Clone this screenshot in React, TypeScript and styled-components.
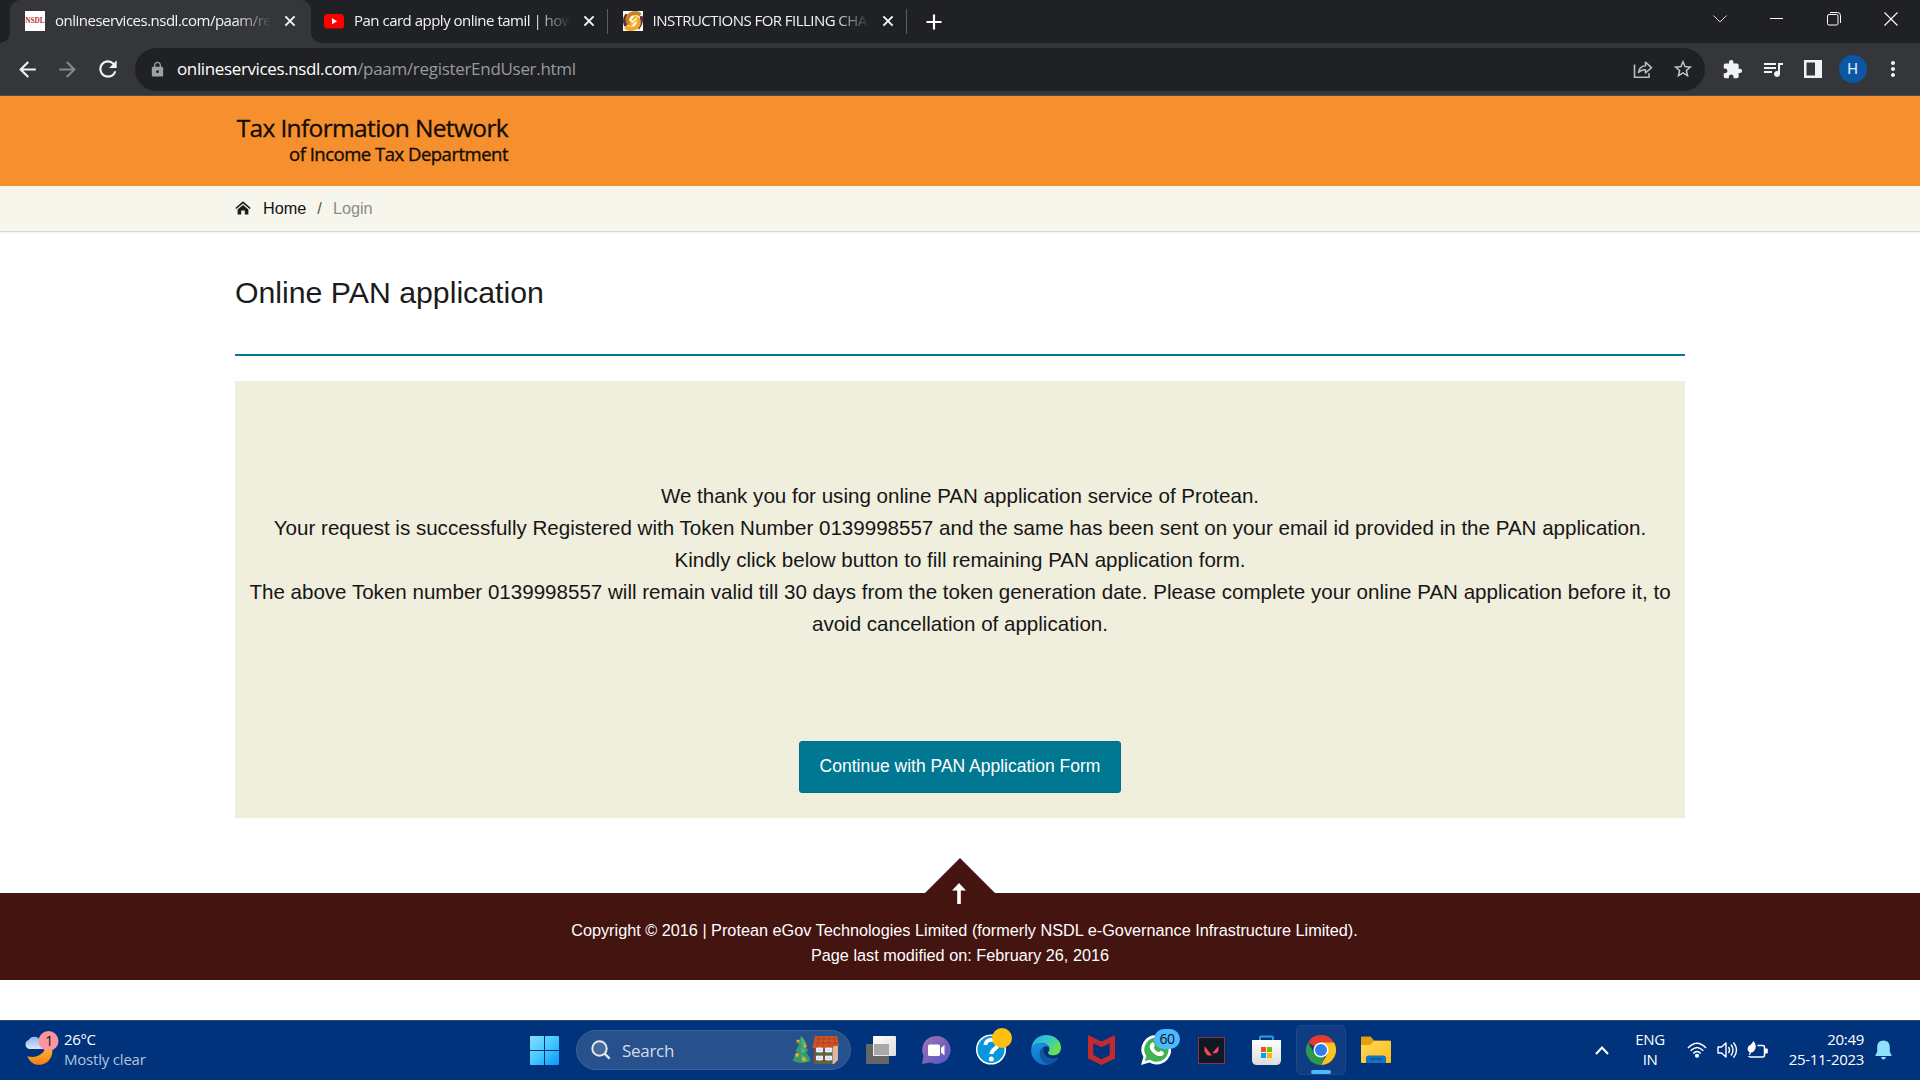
import React from "react";
import styled, { createGlobalStyle } from "styled-components";
import { MdArrowBack, MdArrowForward, MdExtension, MdLock, MdMoreVert, MdQueueMusic, MdRefresh, MdStarOutline } from "react-icons/md";

const ui = `"Open Sans", "Noto Sans", sans-serif`;
const arial = `"Liberation Sans", Arial, sans-serif`;

const Global = createGlobalStyle`
  * { box-sizing: border-box; }
  body { margin: 0; background: #fff; overflow: hidden; }
  svg { display: block; flex: none; }
`;

const Screen = styled.div`
  width: 1920px;
  height: 1080px;
  display: flex;
  flex-direction: column;
  overflow: hidden;
  font-family: ${arial};
`;

/* ---------- browser chrome ---------- */

const TabStrip = styled.div`
  height: 43px;
  flex: none;
  display: flex;
  padding-left: 10px;
  background: #202124;
  color: #f1f3f4;
`;

const TabBox = styled.div<{ $active?: boolean; $divider?: boolean }>`
  position: relative;
  width: ${(p) => (p.$active ? 301 : 298.5)}px;
  margin-right: ${(p) => (p.$active ? -2 : 0)}px;
  height: 43px;
  display: flex;
  align-items: center;
  padding: 0 0 1px 15px;
  border-radius: 10px 10px 0 0;
  background: ${(p) => (p.$active ? "#35363a" : "transparent")};
  &::after {
    content: "";
    display: ${(p) => (p.$divider ? "block" : "none")};
    position: absolute;
    right: -0.5px;
    top: 9px;
    width: 1px;
    height: 25px;
    background: #5b5e62;
  }
`;

const Flare = styled.span<{ $side: "left" | "right" }>`
  position: absolute;
  bottom: 0;
  ${(p) => p.$side}: -10px;
  width: 10px;
  height: 10px;
  background: radial-gradient(circle at ${(p) => (p.$side === "left" ? "0 0" : "100% 0")}, transparent 9.5px, #35363a 10px);
`;

const TabTitle = styled.span<{ $spacing: number }>`
  width: 215px;
  margin-left: 10px;
  padding-bottom: 2px;
  font: 400 15px/24px ${ui};
  letter-spacing: ${(p) => p.$spacing}px;
  white-space: nowrap;
  overflow: hidden;
  mask-image: linear-gradient(to right, #000 180px, transparent 217px);
`;

const TabClose = styled.span`
  display: flex;
  margin-left: 10px;
`;

const NewTab = styled.span`
  display: flex;
  align-items: center;
  margin-left: 20px;
`;

const WindowControls = styled.div`
  display: flex;
  margin-left: auto;
  padding-right: 1px;
`;

const WindowButton = styled.span`
  width: 57px;
  height: 37px;
  display: flex;
  align-items: center;
  justify-content: center;
`;

const Toolbar = styled.div`
  height: 53px;
  flex: none;
  display: flex;
  align-items: center;
  padding: 0 7.5px;
  background: #35363a;
  border-bottom: 1px solid #4a4b4e;
`;

const ToolSlot = styled.span<{ $color?: string }>`
  width: 40px;
  display: flex;
  justify-content: center;
  color: ${(p) => p.$color ?? "#f1f3f4"};
`;

const Omnibox = styled.div`
  flex: 1;
  height: 43px;
  display: flex;
  align-items: center;
  margin: 0 7.5px;
  padding: 0 2.5px 0 14px;
  border-radius: 22px;
  background: #202124;
`;

const Url = styled.span`
  flex: 1;
  margin-left: 11px;
  font: 400 17px/28px ${ui};
  letter-spacing: -0.37px;
  color: #fff;
`;

const UrlPath = styled.span`
  color: #969a9f;
  letter-spacing: -0.3px;
`;

const Avatar = styled.span`
  width: 28px;
  height: 28px;
  border-radius: 50%;
  background: #0b57a4;
  color: #e6f0fa;
  font: 400 15px/28px Roboto, sans-serif;
  text-align: center;
`;

/* ---------- page ---------- */

const Banner = styled.header`
  height: 90px;
  flex: none;
  padding: 17px 0 0 235px;
  background: #f68f2e;
`;

const BrandBlock = styled.div`
  width: 273px;
  text-align: right;
  color: #140d04;
  white-space: nowrap;
  -webkit-text-stroke: 0.35px #140d04;
`;

const BrandName = styled.div`
  font: 400 24.5px/30px ${ui};
  letter-spacing: -0.64px;
`;

const BrandSub = styled.div`
  font: 400 18.5px/21px ${ui};
  letter-spacing: -0.5px;
`;

const Breadcrumb = styled.nav`
  height: 46px;
  flex: none;
  display: flex;
  align-items: center;
  padding: 0 0 1px 235px;
  background: #f7f6ec;
  border-bottom: 1px solid #d9d9d6;
  box-shadow: 0 1px 2px rgba(0, 0, 0, 0.07);
  font-size: 16.25px;
`;

const Crumb = styled.span<{ $color: string; $gap: number }>`
  margin-left: ${(p) => p.$gap}px;
  color: ${(p) => p.$color};
`;

const Main = styled.main`
  height: 626px;
  flex: none;
  padding: 0 235px;
`;

const Title = styled.h1`
  height: 124px;
  margin: 0;
  padding-top: 43px;
  border-bottom: 2px solid #007a94;
  color: #1b1b1b;
  font: 400 30.25px/36px ${arial};
`;

const Panel = styled.section`
  height: 437px;
  margin-top: 25px;
  padding-top: 99px;
  display: flex;
  flex-direction: column;
  align-items: center;
  background: #f0eedd;
`;

const Message = styled.p`
  margin: 0;
  color: #161616;
  font-size: 20.57px;
  line-height: 32px;
  text-align: center;
  white-space: nowrap;
`;

const Continue = styled.button`
  width: 322px;
  height: 52px;
  margin-top: 101px;
  padding: 0 0 2px;
  border: 1px solid #006d86;
  border-radius: 3px;
  background: #007892;
  color: #fff;
  font: 400 17.5px/24px ${arial};
`;

const ToTop = styled.div`
  position: relative;
  z-index: 1;
  height: 35px;
  flex: none;
  display: flex;
  justify-content: center;
  align-items: flex-start;
`;

const Footer = styled.footer`
  height: 87px;
  flex: none;
  padding-top: 25px;
  background: #441411;
  color: #fff;
  font-size: 16.25px;
  line-height: 25px;
  text-align: center;
`;

const Copyright = styled.div`
  padding-left: 9px;
`;

/* ---------- taskbar ---------- */

const Taskbar = styled.div`
  height: 60px;
  margin-top: auto;
  flex: none;
  display: flex;
  align-items: center;
  padding-bottom: 1px;
  background: #00337c;
  border-top: 1px solid #2a4f86;
  font-family: ${ui};
  color: #fff;
`;

const Weather = styled.div`
  width: 517px;
  display: flex;
  align-items: center;
  padding: 0 0 1px 24px;
  font-size: 15px;
  line-height: 20px;
  letter-spacing: -0.35px;
`;

const WeatherText = styled.div`
  margin: -2px 0 0 5px;
`;

const Muted = styled.div`
  color: #b5c3da;
  letter-spacing: -0.2px;
`;

const AppSlot = styled.span`
  width: 55px;
  height: 50px;
  display: flex;
  align-items: center;
  justify-content: center;
`;

const ActiveTile = styled.span`
  position: relative;
  width: 50px;
  height: 50px;
  display: flex;
  align-items: center;
  justify-content: center;
  border: 1px solid #1d4789;
  border-radius: 5px;
  background: #103d82;
  &::after {
    content: "";
    position: absolute;
    left: 14px;
    bottom: 0;
    width: 20px;
    height: 4px;
    border-radius: 2px;
    background: #4cb8ff;
  }
`;

const SearchBox = styled.div`
  width: 275px;
  height: 40px;
  margin: 0 2.5px 0 4px;
  padding: 0 11px 0 14px;
  display: flex;
  align-items: center;
  border: 1px solid #3c639a;
  border-radius: 20px;
  background: #27518c;
`;

const SearchLabel = styled.span`
  flex: 1;
  margin-left: 11px;
  color: #d4dceb;
  font-size: 17px;
  letter-spacing: -0.3px;
`;

const Tray = styled.div`
  width: 333px;
  margin-left: auto;
  display: flex;
  align-items: center;
  font-size: 15px;
  line-height: 20px;
`;

const TrayCell = styled.span<{ $w: number; $lift?: number }>`
  width: ${(p) => p.$w}px;
  padding-bottom: ${(p) => p.$lift ?? 0}px;
  display: flex;
  justify-content: center;
  text-align: center;
  letter-spacing: -0.4px;
`;

const Clock = styled.div`
  width: 93px;
  padding-bottom: 3px;
  text-align: right;
  letter-spacing: -0.3px;
`;

const HelpWrap = styled.span`
  display: flex;
  margin: -7px -6px 0 0;
`;

const WhatsappBadged = styled.span`
  position: relative;
  width: 30px;
  height: 30px;
`;

const CountBadge = styled.span`
  position: absolute;
  left: 13px;
  top: -6px;
  width: 26px;
  height: 20px;
  border-radius: 10px;
  background: #4cb8ff;
  color: #10161f;
  font-size: 14px;
  line-height: 19px;
  letter-spacing: -0.5px;
  text-align: center;
`;

/* ---------- icons ---------- */

const Cross = () => (
  <svg width="20" height="20" viewBox="0 0 20 20" stroke="#f1f3f4" strokeWidth="2"><path d="M5.4 5.4l9.2 9.2M14.6 5.4l-9.2 9.2" /></svg>
);

const NsdlFavicon = () => (
  <svg width="20" height="20" viewBox="0 0 20 20">
    <rect width="20" height="20" fill="#fff" />
    <text x="10" y="12.4" textAnchor="middle" textLength="19.5" lengthAdjust="spacingAndGlyphs" fontFamily="Liberation Serif, serif" fontWeight="700" fontSize="8" fill="#b8323a">NSDL</text>
  </svg>
);

const YoutubeFavicon = () => (
  <svg width="20" height="20" viewBox="0 0 20 20">
    <rect x="0" y="3" width="20" height="14.5" rx="3.6" fill="#f00" />
    <path d="M8 7.2l5.2 3.1L8 13.3z" fill="#fff" />
  </svg>
);

const SwirlFavicon = () => (
  <svg width="20" height="20" viewBox="0 0 20 20" fill="none">
    <rect width="20" height="20" fill="#fff" />
    <path d="M4 3.5Q0 9 3 15" stroke="#5d3038" strokeWidth="3.5" />
    <path d="M18 5Q20 11 15 17.5" stroke="#5d3038" strokeWidth="3" />
    <path d="M17.500 4C13 .5 5 2 4.500 8.500c-.2 3 1.500 4.500 4.500 4.500" stroke="#c9821f" strokeWidth="4" />
    <path d="M2.500 16C7 19.500 15.500 18 15.800 11.500c.1-3-1.600-4.500-4.300-4.500" stroke="#efaa22" strokeWidth="4.200" />
    <path d="M8 9l5-6v8.500z" fill="#f7b52c" />
    <path d="M12 11l-5 6-.5-8z" fill="#f7b52c" />
    <path d="M6.500 8l3 3 4.500-4" stroke="#fff8e0" strokeWidth="1.300" />
  </svg>
);

const ShareIcon = () => (
  <svg width="20" height="20" viewBox="0 0 20 20" fill="none" stroke="#b9bbbe" strokeWidth="1.6">
    <path d="M1.500 5.500v12.700h14.500v-4" />
    <path d="M5.500 13.500c.4-4 2.800-6.500 7-6.800V3.200l6 5.500-6 5.300v-3.300c-3.200-.1-5.300.8-7 2.800z" strokeLinejoin="round" />
  </svg>
);

const HomeIcon = () => (
  <svg width="16" height="14" viewBox="0 0 16 14" fill="#1c1c1c">
    <path d="M.3 6.900L8 .3l7.700 6.600-1 1.200L8 2.400 1.300 8.100z" />
    <path d="M2.600 8.400L8 3.900l5.400 4.500V13.600H9.800V9.600H6.200v4H2.600z" />
  </svg>
);

const UpTriangle = () => (
  <svg width="70" height="46" viewBox="0 0 70 46">
    <path d="M35 0L70 35V46H0V35z" fill="#441411" />
    <path d="M34 25l7 7.500h-5.200V46h-3.600V32.500H27z" fill="#fff" />
  </svg>
);

const WeatherIcon = () => (
  <svg width="35" height="38" viewBox="0 0 35 38">
    <defs>
      <linearGradient id="moon" x1="0" y1="0" x2="0" y2="1"><stop offset="0" stopColor="#ffc23a" /><stop offset="1" stopColor="#f57c14" /></linearGradient>
      <linearGradient id="cloud" x1="0" y1="0" x2="0" y2="1"><stop offset="0" stopColor="#8fb4ee" /><stop offset="1" stopColor="#dbe6fa" /></linearGradient>
    </defs>
    <path d="M27 14c4 8-1 18-9 19.500C11 35 5 31 3.500 25c6 3 18-1 18-10z" fill="url(#moon)" />
    <path d="M5 18a4.700 4.700 0 01-.3-9A6.500 6.500 0 0116 9c5 0 6 4 4 9z" fill="url(#cloud)" />
    <circle cx="24.500" cy="10" r="10" fill="#ff949e" />
    <text x="25" y="15" textAnchor="middle" fontFamily="Open Sans, sans-serif" fontSize="14" fill="#111">1</text>
  </svg>
);

const StartIcon = () => (
  <svg width="29" height="29" viewBox="0 0 29 29">
    <defs><linearGradient id="win" x1="0" y1="0" x2="1" y2="1"><stop offset="0" stopColor="#83e0fb" /><stop offset=".5" stopColor="#45c8ff" /><stop offset="1" stopColor="#0895fa" /></linearGradient></defs>
    <path d="M1 0H14V14H0V1a1 1 0 011-1zM15 0h13a1 1 0 011 1v13H15zM0 15h14v14H1a1 1 0 01-1-1zM15 15h14v13a1 1 0 01-1 1H15z" fill="url(#win)" />
  </svg>
);

const SearchIcon = () => (
  <svg width="20" height="20" viewBox="0 0 20 20" fill="none" stroke="#e4e7ec" strokeWidth="2">
    <circle cx="8.500" cy="8.500" r="7.200" fill="#476a9d" /><path d="M13.600 13.600l5 5" strokeWidth="2.400" />
  </svg>
);

const HolidayArt = () => (
  <svg width="47" height="30" viewBox="0 0 47 30">
    <path d="M9.500 1l5 8-2 .3 4 7-2.300.4 4 7.300 0 2q-9 4-17 0l0-2 4-7.300-2-.4 4-7-2-.3z" fill="#35996a" />
    <path d="M9.500 1l5 8-5 1.500zM9.500 11l4.500 5.500-4.500 2zM9.500 19l7 7-7 1z" fill="#4fb583" />
    <g fill="#f5a81f"><circle cx="6" cy="6" r="1.600" /><circle cx="13" cy="11" r="1.700" /><circle cx="5" cy="20" r="1.900" /><circle cx="12" cy="24" r="1.900" /></g>
    <path d="M22 11h18l6-4v18l-4 4H22z" fill="#dcb6a4" />
    <path d="M22 11h18.500v18H22z" fill="#8d4c3e" />
    <path d="M23 1h22l2 10-5 0-1.500 2H20.500z" fill="#cf5526" />
    <path d="M24 4h21M22 8h24M27 1l-2 11M32 1l-1 11M37 1l0 11M42 1l1 9" stroke="#a93d18" strokeWidth=".7" />
    <path d="M24.500 13h6v4h-6zM33.500 13h6v4h-6zM24.500 21h6v4h-6zM33.500 21h6v4h-6z" fill="#d5e4fa" stroke="#fff" strokeWidth=".8" />
    <path d="M24 18q3.500 3 7 0M33 18q3.500 3 7 0M24 26q3.500 3 7 0M33 26q3.500 3 7 0" stroke="#2b7a49" strokeWidth="1.700" fill="none" />
  </svg>
);

const TaskViewIcon = () => (
  <svg width="30" height="28" viewBox="0 0 30 28">
    <defs><linearGradient id="tv" x1="0" y1="0" x2="1" y2="1"><stop offset="0" stopColor="#fff" /><stop offset="1" stopColor="#ddd" /></linearGradient></defs>
    <rect x="0" y="8" width="23" height="20" rx="1" fill="#666" />
    <rect x="7" y="0" width="23" height="20" rx="1" fill="url(#tv)" />
    <path d="M8 8h15v11H8z" fill="#a9a9a9" />
  </svg>
);

const MeetIcon = () => (
  <svg width="30" height="30" viewBox="0 0 30 30">
    <defs><linearGradient id="meet" x1="0" y1="0" x2="1" y2="1"><stop offset="0" stopColor="#a077b4" /><stop offset=".5" stopColor="#7a62b8" /><stop offset="1" stopColor="#5558d0" /></linearGradient></defs>
    <path d="M15.500 1a14 14 0 11-6 26.600L1 29l1.500-8A14 14 0 0115.500 1z" fill="url(#meet)" />
    <rect x="7" y="9.500" width="12" height="11.500" rx="1.500" fill="#fff" /><path d="M20 13l3.500-3v10.500L20 17.500z" fill="#fff" />
  </svg>
);

const HelpIcon = () => (
  <HelpWrap>
    <svg width="36" height="37" viewBox="0 0 36 37">
      <circle cx="15" cy="21.500" r="14.300" fill="#0698db" stroke="#fff" strokeWidth="1.500" />
      <path d="M9.500 17c0-7 12-7 12 0 0 4-6 4-6 9" stroke="#fff" strokeWidth="4" fill="none" /><circle cx="15.300" cy="31" r="2.500" fill="#fff" />
      <circle cx="26" cy="10" r="10" fill="#ffbf0f" />
    </svg>
  </HelpWrap>
);

const EdgeIcon = () => (
  <svg width="30" height="30" viewBox="0 0 30 30">
    <defs>
      <linearGradient id="eg" x1="0" y1="0" x2="1" y2=".5"><stop offset="0" stopColor="#2aa5e8" /><stop offset=".5" stopColor="#32c6d2" /><stop offset="1" stopColor="#6ae04f" /></linearGradient>
      <linearGradient id="eb" x1="0" y1="0" x2="0" y2="1"><stop offset="0" stopColor="#1793e0" /><stop offset="1" stopColor="#0c6fce" /></linearGradient>
    </defs>
    <path d="M.3 14C1 5.500 7 0 15.200 0 23.500 0 30 5.500 30 12.500c0 5-3.500 7.800-7.500 7.800-3.500 0-5.500-1.300-5.500-2.400 0-1 1.400-1.500 1.400-3.900C18.400 11 15 8 11 8 5 8 1.500 10.500.3 14z" fill="url(#eg)" />
    <path d="M.1 15C.5 10.500 4.500 8 9.500 8c5 0 8.900 3 8.900 6.300 0-1.800-1.700-3-3.600-3-3 0-5 3.200-5 7 0 5.500 3.500 10.200 8 11.400C8 31.200 0 24.500.1 15z" fill="url(#eb)" />
    <path d="M14 11.400c-5.500 1-7 8-3.500 13 2.200 3.200 5 5 7.300 5.400 4-.8 7.700-3.600 9.700-7 .2-.5-.2-.8-.7-.6-6 3.200-14.300-.3-14.300-6.600 0-1.700.4-3.200 1.500-4.200z" fill="#14559f" />
  </svg>
);

const McAfeeIcon = () => (
  <svg width="27" height="30" viewBox="0 0 27 30"><path d="M0 0l13.500 6.500L27 0v23.500L13.500 30 0 23.500zM5.300 8.200v11.900l8.200 4.100 8.200-4.100V8.200l-8.200 4z" fill="#c12a2e" /></svg>
);

const WhatsappIcon = () => (
  <WhatsappBadged>
    <svg width="30" height="30" viewBox="0 0 30 30">
      <path d="M15.300 0a14.700 14.700 0 11-7 27.500L0 30l2.400-7.900A14.700 14.700 0 0115.300 0z" fill="#fff" />
      <path d="M15.300 2.600a12.100 12.100 0 11-6.500 22.200L3.800 26l1.500-4.700A12.100 12.100 0 0115.300 2.600z" fill="#3fb34f" />
      <path d="M10.500 8c1-1 2-.8 2.400.3l.9 2.300c.3.900-1.200 1.600-.9 2.300 1 2 2.500 3.300 4.600 4.200.8.300 1.400-1.600 2.300-1.300l2.500 1.200c1 .5.700 1.700 0 2.700-1.700 2-4.500 1.600-7 .5-3-1.500-5.600-4.300-6.500-7.400-.5-1.900.3-3.500 1.700-4.800z" fill="#fff" />
    </svg>
    <CountBadge>60</CountBadge>
  </WhatsappBadged>
);

const ValorantIcon = () => (
  <svg width="27" height="27" viewBox="0 0 27 27">
    <rect x=".5" y=".5" width="26" height="26" fill="#0f1923" stroke="#8c3043" />
    <path d="M6.500 9l7.500 9.500h-4.500l-3-4zM20.500 9v5l-2 2.300h-4.300z" fill="#f4475a" />
  </svg>
);

const StoreIcon = () => (
  <svg width="29" height="30" viewBox="0 0 29 30">
    <defs><linearGradient id="st" x1="0" y1="0" x2="0" y2="1"><stop offset="0" stopColor="#fff" /><stop offset="1" stopColor="#dcdcdc" /></linearGradient></defs>
    <path d="M8 6V2.500Q8 1.500 9 1.500h11q1 0 1 1V6" fill="none" stroke="#1ea7ea" strokeWidth="1.800" />
    <path d="M0 5h29v20q0 5-5 5H5q-5 0-5-5z" fill="url(#st)" />
    <path d="M9 12h5v5H9z" fill="#f25022" /><path d="M15 12h5v5h-5z" fill="#7fba00" /><path d="M9 18h5v5H9z" fill="#00a4ef" /><path d="M15 18h5v5h-5z" fill="#ffb900" />
  </svg>
);

const ChromeIcon = () => (
  <svg width="30" height="30" viewBox="0 0 30 30">
    <path d="M15 15L2 7.500A15 15 0 0128 7.500z" fill="#e33b2e" />
    <path d="M15 7.500h13A15 15 0 0115 30l6.500-11.200z" fill="#fcc31e" />
    <path d="M2 7.500l6.500 11.200L15 22.500h4.300L15 30A15 15 0 012 7.500z" fill="#2c9a48" />
    <circle cx="15" cy="15" r="7.500" fill="#fff" /><circle cx="15" cy="15" r="6" fill="#2f7de9" />
  </svg>
);

const ExplorerIcon = () => (
  <svg width="30" height="28" viewBox="0 0 30 28">
    <defs><linearGradient id="fo" x1="0" y1="0" x2="1" y2="1"><stop offset="0" stopColor="#ffd95e" /><stop offset="1" stopColor="#fbbc14" /></linearGradient></defs>
    <path d="M0 1.500Q0 .5 1 .5h8.500l3.500 4H29q1 0 1 1V12H0z" fill="#e5a00d" />
    <path d="M0 9h9.500L13 5h16q1 0 1 1v20q0 1-1 1H1q-1 0-1-1z" fill="url(#fo)" />
    <path d="M5 27v-5q0-2.500 2.500-2.500h15Q25 19.500 25 22v5z" fill="#1272c4" /><path d="M9 23h12" stroke="#0a4f92" strokeWidth="1.200" />
  </svg>
);

const TrayChevron = () => (
  <svg width="14" height="9" viewBox="0 0 14 9" fill="none" stroke="#fff" strokeWidth="2"><path d="M1 8l6-6.500L13 8" /></svg>
);

const WifiIcon = () => (
  <svg width="20" height="16" viewBox="0 0 20 16" fill="none" stroke="#fff" strokeWidth="1.500">
    <path d="M1 6q9-9.500 18 0M3.700 8.800q6.300-6.600 12.600 0M6.300 11.400q3.700-3.900 7.400 0" /><circle cx="10" cy="13.800" r="1.300" fill="#fff" />
  </svg>
);

const SpeakerIcon = () => (
  <svg width="21" height="18" viewBox="0 0 21 18" fill="none" stroke="#fff" strokeWidth="1.400">
    <path d="M1 6h3.500L9 2v14l-4.500-4H1z" strokeLinejoin="round" /><path d="M11.500 6q2 3 0 6M14 3.500q4 5.500 0 11M16.500 1.500q6 7.500 0 15" />
  </svg>
);

const BatteryIcon = () => (
  <svg width="21" height="18" viewBox="0 0 21 18">
    <path d="M10.500 4.500h5q2 0 2 2V14q0 2-2 2H3.500q-1.500 0-2-1" fill="none" stroke="#fff" strokeWidth="1.500" />
    <path d="M18 7.500h2q.8 0 .8 1v3q0 1-.8 1h-2z" fill="#fff" />
    <path d="M6.500 0c3 3.500 3.300 8-.5 11l-2 .5L3 14l-1 0 .6-2.700C-.8 9 .5 4.500 4 3.500z" fill="#fff" />
  </svg>
);

const BellIcon = () => (
  <svg width="17" height="20" viewBox="0 0 17 20" fill="#8fe0ff">
    <path d="M8.500.5c4 0 6.300 2.800 6.300 6.500v5l1.700 3v1H.5v-1l1.700-3V7C2.200 3.300 4.500.5 8.500.5zM6 17h5q-.8 2.500-2.500 2.500T6 17z" />
  </svg>
);

const tabs = [
  { title: "onlineservices.nsdl.com/paam/re", icon: <NsdlFavicon />, active: true, spacing: -0.5 },
  { title: "Pan card apply online tamil | how", icon: <YoutubeFavicon />, divider: true, spacing: -0.5 },
  { title: "INSTRUCTIONS FOR FILLING CHA", icon: <SwirlFavicon />, divider: true, spacing: -0.55 },
];

const apps = [
  <TaskViewIcon />, <MeetIcon />, <HelpIcon />, <EdgeIcon />, <McAfeeIcon />,
  <WhatsappIcon />, <ValorantIcon />, <StoreIcon />,
  <ActiveTile><ChromeIcon /></ActiveTile>, <ExplorerIcon />,
];

export default function App() {
  return (
    <Screen>
      <Global />
      <TabStrip>
        {tabs.map((t) => (
          <TabBox key={t.title} $active={t.active} $divider={t.divider}>
            {t.active && <><Flare $side="left" /><Flare $side="right" /></>}
            {t.icon}
            <TabTitle $spacing={t.spacing}>{t.title}</TabTitle>
            <TabClose><Cross /></TabClose>
          </TabBox>
        ))}
        <NewTab>
          <svg width="16" height="16" viewBox="0 0 16 16" stroke="#fff" strokeWidth="2.200"><path d="M8 .5v15M.5 8h15" /></svg>
        </NewTab>
        <WindowControls>
          <WindowButton><svg width="14" height="8" viewBox="0 0 14 8" fill="none" stroke="#ddd"><path d="M.5.5L7 7 13.500.5" /></svg></WindowButton>
          <WindowButton><svg width="13" height="1" viewBox="0 0 13 1"><rect width="13" height="1" fill="#fff" /></svg></WindowButton>
          <WindowButton><svg width="14" height="14" viewBox="0 0 14 14" fill="none" stroke="#fff"><rect x=".5" y="2.500" width="10.500" height="10.500" rx="1.500" /><path d="M3 .5h7.500q3 0 3 3V11" /></svg></WindowButton>
          <WindowButton><svg width="14" height="14" viewBox="0 0 14 14" stroke="#fff" strokeWidth="1.100"><path d="M.5.5l13 13M13.500.5l-13 13" /></svg></WindowButton>
        </WindowControls>
      </TabStrip>
      <Toolbar>
        <ToolSlot><MdArrowBack size={25} /></ToolSlot>
        <ToolSlot $color="#85878a"><MdArrowForward size={25} /></ToolSlot>
        <ToolSlot><MdRefresh size={26} /></ToolSlot>
        <Omnibox>
          <MdLock size={17} color="#9aa0a6" />
          <Url>onlineservices.nsdl.com<UrlPath>/paam/registerEndUser.html</UrlPath></Url>
          <ToolSlot><ShareIcon /></ToolSlot>
          <ToolSlot $color="#c5c7ca"><MdStarOutline size={22} /></ToolSlot>
        </Omnibox>
        <ToolSlot><MdExtension size={21} /></ToolSlot>
        <ToolSlot><MdQueueMusic size={24} /></ToolSlot>
        <ToolSlot><svg width="18" height="18" viewBox="0 0 18 18"><path d="M0 0h18v18H0zM2.500 2.500v13h8.500v-13z" fill="#f1f3f4" fillRule="evenodd" /></svg></ToolSlot>
        <ToolSlot><Avatar>H</Avatar></ToolSlot>
        <ToolSlot><MdMoreVert size={24} /></ToolSlot>
      </Toolbar>

      <Banner>
        <BrandBlock>
          <BrandName>Tax Information Network</BrandName>
          <BrandSub>of Income Tax Department</BrandSub>
        </BrandBlock>
      </Banner>
      <Breadcrumb>
        <HomeIcon />
        <Crumb $color="#111" $gap={12}>Home</Crumb>
        <Crumb $color="#555" $gap={11}>/</Crumb>
        <Crumb $color="#8b8b88" $gap={11}>Login</Crumb>
      </Breadcrumb>
      <Main>
        <Title>Online PAN application</Title>
        <Panel>
          <Message>
            We thank you for using online PAN application service of Protean.<br />
            Your request is successfully Registered with Token Number 0139998557 and the same has been sent on your email id provided in the PAN application.<br />
            Kindly click below button to fill remaining PAN application form.<br />
            The above Token number 0139998557 will remain valid till 30 days from the token generation date. Please complete your online PAN application before it, to<br />
            avoid cancellation of application.
          </Message>
          <Continue>Continue with PAN Application Form</Continue>
        </Panel>
      </Main>
      <ToTop><UpTriangle /></ToTop>
      <Footer>
        <Copyright>Copyright © 2016 | Protean eGov Technologies Limited (formerly NSDL e-Governance Infrastructure Limited).</Copyright>
        <div>Page last modified on: February 26, 2016</div>
      </Footer>

      <Taskbar>
        <Weather>
          <WeatherIcon />
          <WeatherText><div>26°C</div><Muted>Mostly clear</Muted></WeatherText>
        </Weather>
        <AppSlot><StartIcon /></AppSlot>
        <SearchBox>
          <SearchIcon />
          <SearchLabel>Search</SearchLabel>
          <HolidayArt />
        </SearchBox>
        {apps.map((icon, i) => <AppSlot key={i}>{icon}</AppSlot>)}
        <Tray>
          <TrayCell $w={30}><TrayChevron /></TrayCell>
          <TrayCell $w={66} $lift={2}>ENG<br />IN</TrayCell>
          <TrayCell $w={28}><WifiIcon /></TrayCell>
          <TrayCell $w={32}><SpeakerIcon /></TrayCell>
          <TrayCell $w={28}><BatteryIcon /></TrayCell>
          <Clock>20:49<br />25-11-2023</Clock>
          <TrayCell $w={39}><BellIcon /></TrayCell>
        </Tray>
      </Taskbar>
    </Screen>
  );
}
